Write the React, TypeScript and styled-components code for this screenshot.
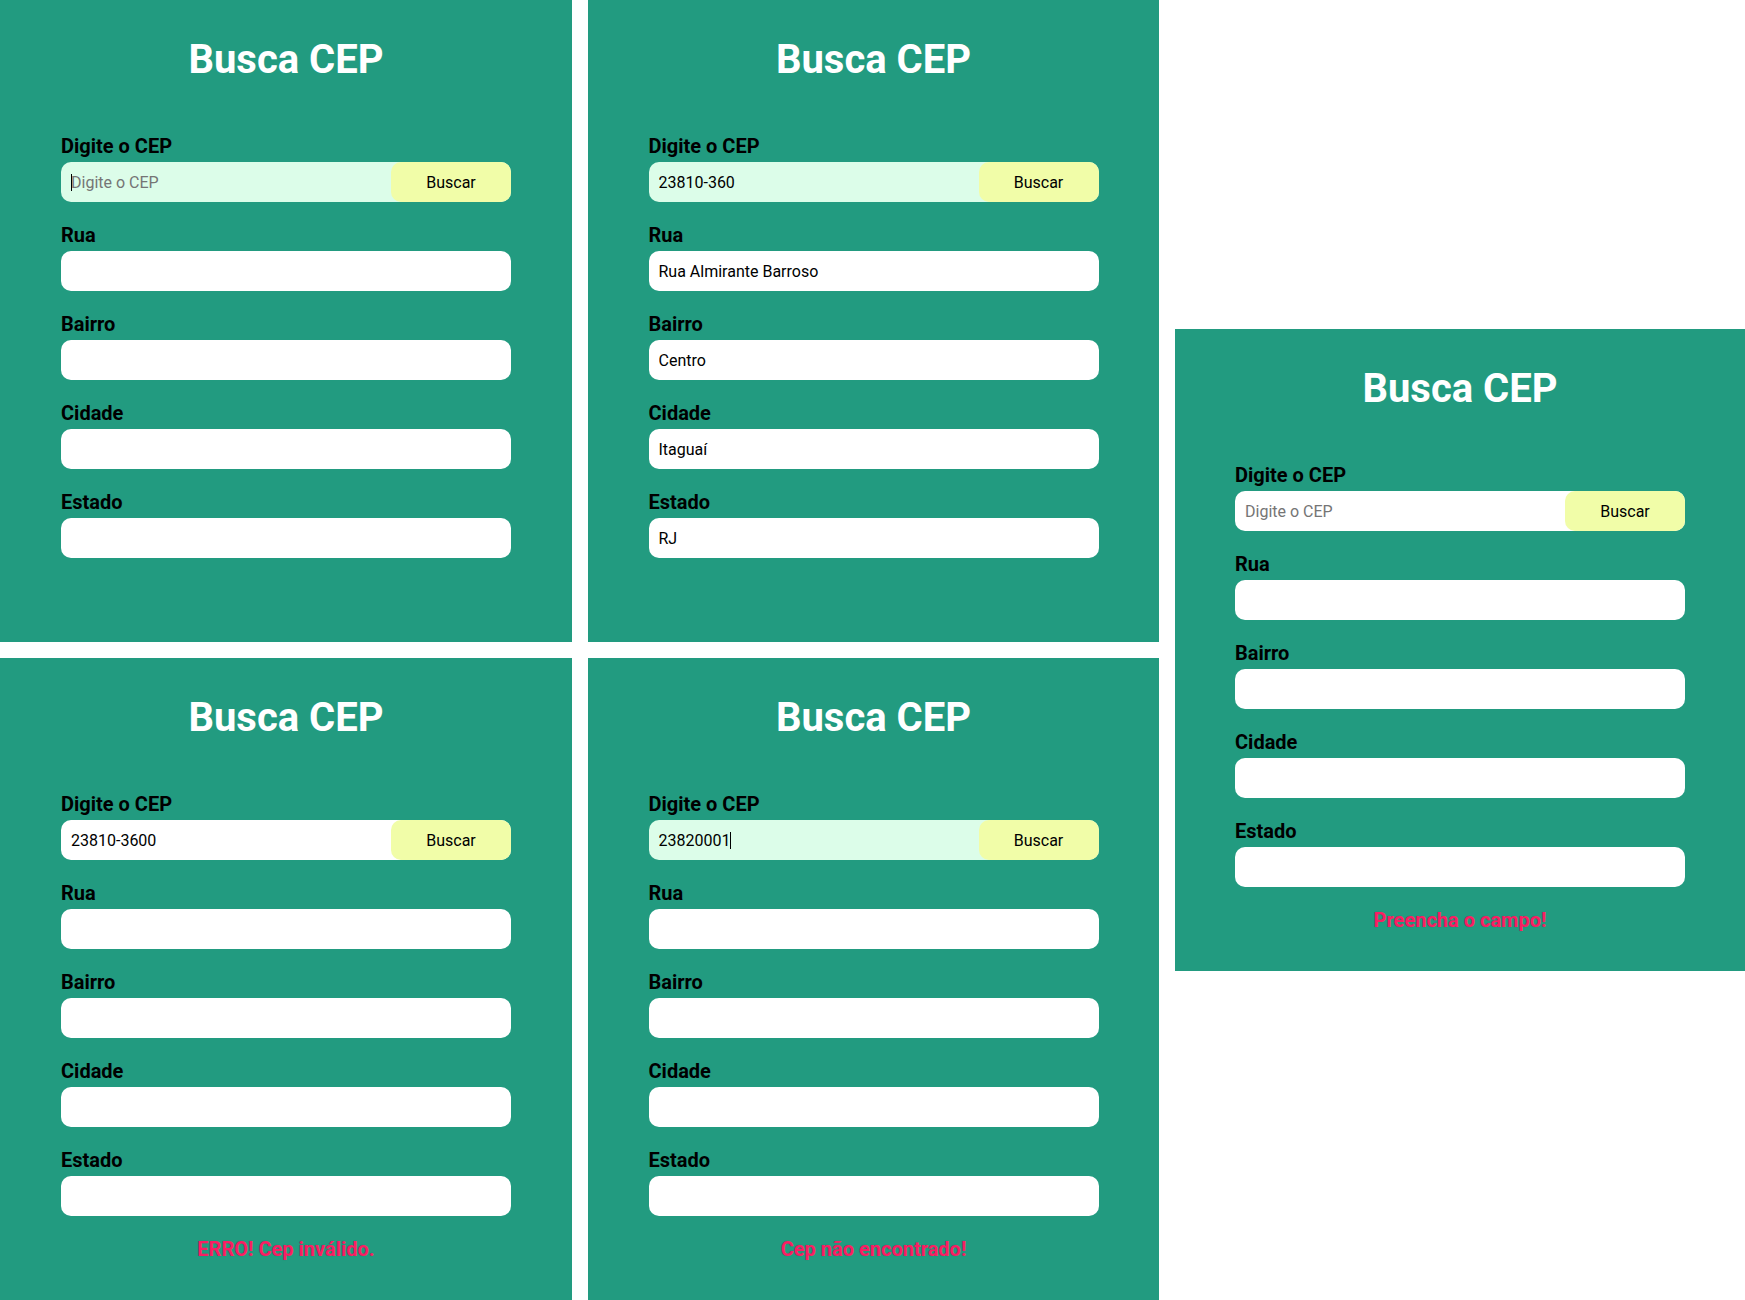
import React from "react";
import styled, { createGlobalStyle } from "styled-components";

const GlobalStyle = createGlobalStyle`
  html, body {
    margin: 0;
    padding: 0;
    background: #ffffff;
    font-family: Roboto, "Liberation Sans", Arial, sans-serif;
  }
  * {
    box-sizing: border-box;
  }
`;

const Board = styled.div`
  display: grid;
  grid-template-columns: 572px 571px 570px;
  grid-template-rows: 642px 642px;
  column-gap: 16px;
  row-gap: 16px;
  width: 1745px;
  height: 1300px;
`;

const Panel = styled.section<{ $tall?: boolean }>`
  background: #229b80;
  height: 642px;
  display: flex;
  flex-direction: column;
  align-items: center;
  padding-top: 36px;
  ${({ $tall }) =>
    $tall &&
    `
    grid-column: 3;
    grid-row: 1 / span 2;
    align-self: center;
  `}
`;

const Title = styled.h1`
  margin: 0 0 52px;
  font-size: 40px;
  line-height: 47px;
  font-weight: 700;
  color: #ffffff;
`;

const Form = styled.div`
  width: 450px;
  display: flex;
  flex-direction: column;
  gap: 22px;
`;

const Field = styled.div`
  display: flex;
  flex-direction: column;
  gap: 4px;
`;

const Label = styled.label`
  font-size: 20px;
  line-height: 23px;
  font-weight: 700;
  color: #000000;
`;

const Input = styled.input<{ $focused?: boolean }>`
  width: 100%;
  height: 40px;
  border: none;
  outline: none;
  border-radius: 10px;
  padding: 0 10px;
  font-family: Roboto, "Liberation Sans", Arial, sans-serif;
  font-size: 16px;
  color: #000000;
  background: ${({ $focused }) => ($focused ? "#dcfde9" : "#ffffff")};

  &::placeholder {
    color: #757575;
  }
`;

const SearchStack = styled.div`
  display: grid;
  grid-template-areas: "cell";

  & > * {
    grid-area: cell;
  }
`;

const Caret = styled.span<{ $left: number }>`
  justify-self: start;
  align-self: center;
  margin-left: ${({ $left }) => $left}px;
  width: 1px;
  height: 17px;
  background: #000000;
  pointer-events: none;
`;

const SearchButton = styled.button`
  justify-self: end;
  width: 120px;
  height: 40px;
  border: none;
  border-radius: 10px;
  background: #f1fda8;
  font-family: Roboto, "Liberation Sans", Arial, sans-serif;
  font-size: 16px;
  color: #000000;
  cursor: pointer;
`;

const Message = styled.p`
  margin: 22px 0 0;
  min-height: 23px;
  font-size: 20px;
  line-height: 23px;
  font-weight: 700;
  color: #fa1d63;
  text-shadow: 0 0 1px rgba(120, 0, 40, 0.35);
  text-align: center;
`;

type Address = {
  rua: string;
  bairro: string;
  cidade: string;
  estado: string;
};

type CardState = {
  cep: string;
  focused: boolean;
  caret?: number;
  address?: Address;
  message?: string;
  tall?: boolean;
};

const cards: CardState[] = [
  { cep: "", focused: true, caret: 10 },
  {
    cep: "23810-360",
    focused: true,
    address: {
      rua: "Rua Almirante Barroso",
      bairro: "Centro",
      cidade: "Itaguaí",
      estado: "RJ",
    },
  },
  { cep: "", focused: false, message: "Preencha o campo!", tall: true },
  { cep: "23810-3600", focused: false, message: "ERRO! Cep inválido." },
  { cep: "23820001", focused: true, caret: 81, message: "Cep não encontrado!" },
];

const fields: { key: keyof Address; label: string }[] = [
  { key: "rua", label: "Rua" },
  { key: "bairro", label: "Bairro" },
  { key: "cidade", label: "Cidade" },
  { key: "estado", label: "Estado" },
];

const CepCard: React.FC<{ state: CardState }> = ({ state }) => {
  return (
    <Panel $tall={state.tall}>
      <Title>Busca CEP</Title>
      <Form>
        <Field>
          <Label>Digite o CEP</Label>
          <SearchStack>
            <Input
              $focused={state.focused}
              placeholder="Digite o CEP"
              defaultValue={state.cep}
            />
            {state.caret !== undefined && <Caret $left={state.caret} />}
            <SearchButton>Buscar</SearchButton>
          </SearchStack>
        </Field>
        {fields.map((f) => (
          <Field key={f.key}>
            <Label>{f.label}</Label>
            <Input readOnly defaultValue={state.address ? state.address[f.key] : ""} />
          </Field>
        ))}
      </Form>
      <Message>{state.message}</Message>
    </Panel>
  );
};

const App: React.FC = () => {
  return (
    <>
      <GlobalStyle />
      <Board>
        {cards.map((c, i) => (
          <CepCard key={i} state={c} />
        ))}
      </Board>
    </>
  );
};

export default App;
